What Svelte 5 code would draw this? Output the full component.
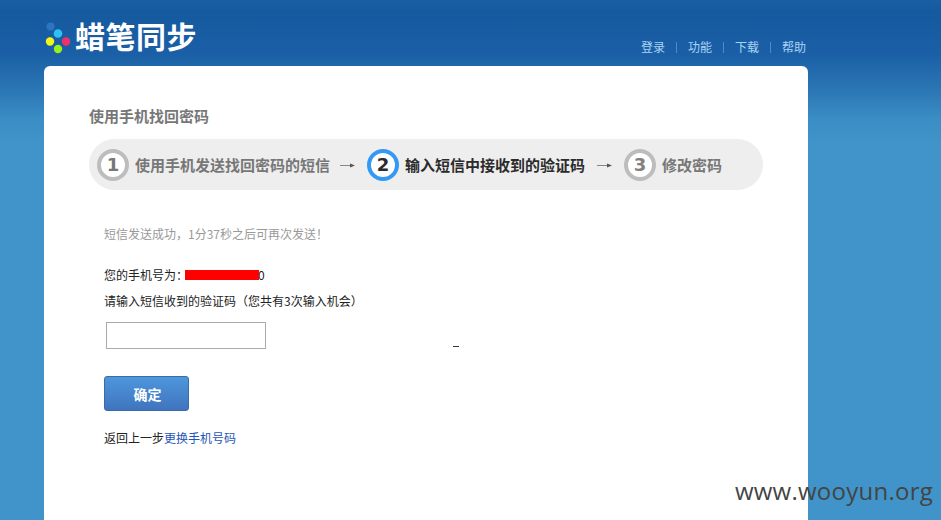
<script>
  const nav = ['登录', '功能', '下载', '帮助'];
  const steps = [
    { n: 1, label: '使用手机发送找回密码的短信', state: 'done' },
    { n: 2, label: '输入短信中接收到的验证码', state: 'active' },
    { n: 3, label: '修改密码', state: 'todo' }
  ];
</script>

<div class="page">
  <div class="wrap">
    <header class="header">
      <div class="logo">
        <svg class="mark" width="26" height="34" viewBox="0 0 26 34" aria-hidden="true">
          <circle cx="6.500" cy="5.500" r="4" fill="#2f74c4" />
          <circle cx="14" cy="12.500" r="4.300" fill="#2fc0f5" />
          <circle cx="6" cy="20.500" r="4.200" fill="#f5f51a" />
          <circle cx="22" cy="20.500" r="4.200" fill="#f0306a" />
          <circle cx="14" cy="28" r="4.200" fill="#9cf01a" />
        </svg>
        <span class="brand">蜡笔同步</span>
      </div>
      <nav class="nav">
        {#each nav as item, i}
          {#if i > 0}<span class="sep"></span>{/if}
          <span class="nav-item">{item}</span>
        {/each}
      </nav>
    </header>

    <main class="card">
      <h1 class="title">使用手机找回密码</h1>

      <div class="steps">
        {#each steps as s, i}
          <div class="step {s.state}">
            <span class="num">{s.n}</span>
            <span class="label">{s.label}</span>
          </div>
          {#if i < steps.length - 1}
            <svg class="arrow" width="16" height="7" viewBox="0 0 16 7" aria-hidden="true">
              <path d="M0 3.500H11" stroke="#888" stroke-width="1" />
              <path d="M10 1.500l5 2-5 2z" fill="#555" />
            </svg>
          {/if}
        {/each}
      </div>

      <div class="body">
        <p class="notice">短信发送成功，1分37秒之后可再次发送！</p>
        <p class="phone">您的手机号为：<span class="mask"></span><span class="tail">0</span></p>
        <p class="prompt">请输入短信收到的验证码（您共有3次输入机会）</p>
        <input class="code" type="text" aria-label="验证码" />
        <button class="submit" type="button">确定</button>
        <p class="back">返回上一步<span class="link">更换手机号码</span></p>
      </div>

      <span class="dash"></span>
    </main>
  </div>

  <div class="watermark">www.wooyun.org</div>
</div>

<style>
  :global(body) {
    margin: 0;
    overflow: hidden;
  }

  .page {
    position: relative;
    height: 520px;
    overflow: hidden;
    background: linear-gradient(to bottom, #1a5ea4 0, #15599f 12px, #1b60a6 55px, #2b76b5 90px, #3b8ec5 120px, #4194ca 145px, #4194ca 520px);
    font-family: "Noto Sans CJK SC", "Liberation Sans", sans-serif;
    font-size: 12px;
    color: #222;
  }

  .wrap {
    width: 764px;
    margin-left: 44px;
  }

  .header {
    height: 66px;
    display: flex;
    justify-content: space-between;
    align-items: flex-start;
  }

  .logo {
    display: flex;
    align-items: flex-start;
    gap: 5px;
    padding-top: 20px;
  }

  .mark {
    flex: none;
    margin-top: 1px;
  }

  .brand {
    font-size: 30px;
    line-height: 34px;
    font-weight: 700;
    color: #fff;
    letter-spacing: 0.5px;
    margin-top: -2px;
  }

  .nav {
    display: flex;
    align-items: center;
    padding-top: 39px;
    padding-right: 1px;
    color: #a9d3f5;
    line-height: 16px;
  }

  .nav-item {
    width: 25px;
    white-space: nowrap;
  }

  .sep {
    width: 1px;
    height: 11px;
    margin: 0 11px 0 10px;
    background: #4f8cc6;
  }

  .card {
    position: relative;
    height: 454px;
    padding: 40px 45px 0;
    box-sizing: border-box;
    background: #fff;
    border-radius: 6px 6px 0 0;
  }

  .title {
    margin: 0;
    font-size: 15px;
    line-height: 20px;
    font-weight: 700;
    color: #777;
  }

  .steps {
    display: flex;
    align-items: center;
    width: 674px;
    height: 51px;
    margin-top: 13px;
    padding-left: 8px;
    box-sizing: border-box;
    background: #eee;
    border-radius: 26px;
  }

  .step {
    display: flex;
    align-items: center;
    gap: 6px;
  }

  .num {
    flex: none;
    width: 32px;
    height: 32px;
    box-sizing: border-box;
    display: flex;
    align-items: center;
    justify-content: center;
    border: 4px solid #bdbdbd;
    border-radius: 50%;
    background: #fff;
    font-family: "DejaVu Sans", sans-serif;
    font-size: 18px;
    font-weight: 700;
    color: #777;
  }

  .label {
    font-size: 15px;
    font-weight: 700;
    color: #777;
    white-space: nowrap;
  }

  .step.active .num {
    border-color: #3399f3;
    color: #2b2b2b;
  }

  .step.active .label {
    color: #2b2b2b;
    padding-right: 2px;
  }

  .step.todo .num {
    color: #808080;
  }

  .arrow {
    flex: none;
    margin: 2px 11px 0 10px;
  }

  .body {
    padding: 0 0 0 15px;
  }

  .notice {
    margin: 34px 0 0;
    line-height: 20px;
    color: #999;
  }

  .phone {
    margin: 21px 0 0;
    line-height: 20px;
    color: #222;
    display: flex;
    align-items: center;
  }

  .mask {
    width: 74px;
    height: 10px;
    margin-left: -3px;
    background: #f00;
  }

  .tail {
    margin-left: -1px;
    line-height: 20px;
  }

  .prompt {
    margin: 6px 0 0;
    line-height: 20px;
  }

  .code {
    display: block;
    width: 160px;
    height: 27px;
    margin: 11px 0 0 2px;
    padding: 0;
    box-sizing: border-box;
    border: 1px solid #aaa;
    background: #fff;
    outline: none;
  }

  .submit {
    display: block;
    width: 85px;
    height: 35px;
    margin-top: 27px;
    padding: 0 0 0 2px;
    border: 1px solid #3a6ba5;
    border-radius: 3px;
    background: linear-gradient(to bottom, #4e97dd, #3f74bd);
    color: #fff;
    font-family: inherit;
    font-size: 14px;
    font-weight: 700;
  }

  .back {
    margin: 17px 0 0;
    line-height: 20px;
  }

  .link {
    color: #1f55b5;
  }

  .dash {
    position: absolute;
    left: 409px;
    top: 280px;
    width: 6px;
    height: 1px;
    background: #333;
  }

  .watermark {
    position: absolute;
    right: 8px;
    bottom: 14px;
    font-family: "Open Sans", "Noto Sans", sans-serif;
    font-size: 24px;
    line-height: 30px;
    color: #444;
    letter-spacing: 0.25px;
  }
</style>
